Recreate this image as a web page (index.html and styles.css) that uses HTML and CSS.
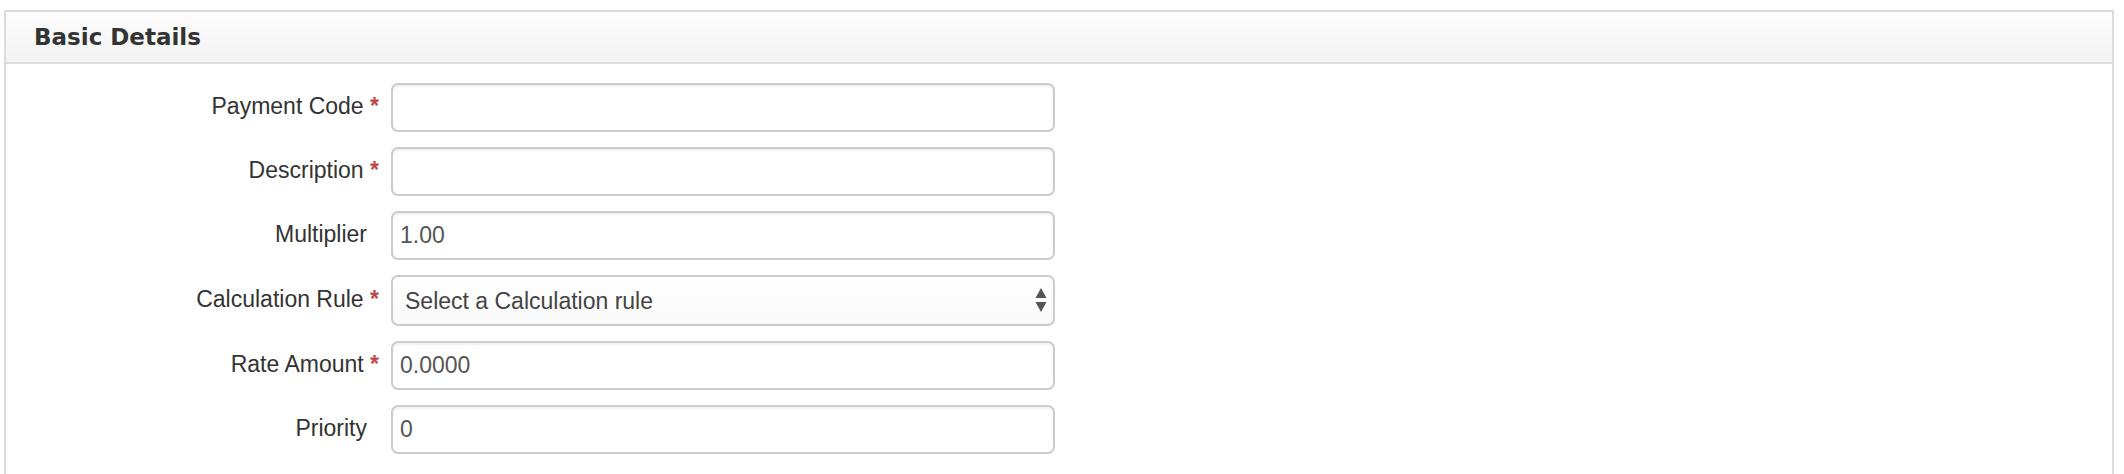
FILE: index.html
```html
<!DOCTYPE html>
<html lang="en">
<head>
  <meta charset="UTF-8" />
  <title>Basic Details</title>
  <link rel="stylesheet" href="styles.css">
</head>
<body>
<div class="panel">
  <div class="panel-heading">Basic Details</div>
  <div class="panel-body">
    <div class="form-row">
      <label class="control-label req">Payment Code <span class="required">*</span></label>
      <input class="form-control" type="text" value="" />
    </div>
    <div class="form-row">
      <label class="control-label req">Description <span class="required">*</span></label>
      <input class="form-control" type="text" value="" />
    </div>
    <div class="form-row">
      <label class="control-label">Multiplier</label>
      <input class="form-control" type="text" value="1.00" />
    </div>
    <div class="form-row">
      <label class="control-label req">Calculation Rule <span class="required">*</span></label>
      <div class="select-wrap">
        <select class="form-control select">
          <option>Select a Calculation rule</option>
        </select>
        <svg class="select-arrows" width="12" height="24" viewBox="0 0 12 24">
          <path d="M6 0 L11.5 10 L0.5 10 Z" fill="#555" />
          <path d="M0.5 14 L11.5 14 L6 24 Z" fill="#555" />
        </svg>
      </div>
    </div>
    <div class="form-row">
      <label class="control-label req">Rate Amount <span class="required">*</span></label>
      <input class="form-control" type="text" value="0.0000" />
    </div>
    <div class="form-row">
      <label class="control-label">Priority</label>
      <input class="form-control" type="text" value="0" />
    </div>
  </div>
</div>
</body>
</html>
```

FILE: styles.css
```css
body {
  margin: 0;
  background: #fff;
  font-family: "Liberation Sans", Arial, sans-serif;
  color: #333;
}
.panel {
  margin: 10px 10px 0 4px;
  border: 2px solid #dcdcdc;
  border-bottom: none;
  min-height: 470px;
}
.panel-heading {
  height: 50px;
  line-height: 50px;
  padding-left: 28px;
  font-family: "DejaVu Sans", Verdana, sans-serif;
  font-weight: bold;
  font-size: 23px;
  color: #333;
  background: linear-gradient(#fdfdfd, #f3f3f3);
  border-bottom: 2px solid #dcdcdc;
}
.panel-body {
  padding-top: 19px;
  display: flex;
  flex-direction: column;
  gap: 15px;
}
.form-row {
  display: flex;
  align-items: center;
}
.control-label {
  width: 385px;
  box-sizing: border-box;
  padding-right: 24px;
  padding-bottom: 2px;
  text-align: right;
  font-size: 23px;
  color: #333;
}
.control-label.req {
  padding-right: 12px;
}
.required {
  color: #b94a48;
  font-weight: bold;
}
.form-control {
  width: 664px;
  height: 49px;
  box-sizing: border-box;
  margin: 0;
  padding: 0 7px;
  border: 2px solid #cccccc;
  border-radius: 7px;
  box-shadow: inset 0 2px 2px rgba(0,0,0,0.06);
  font-family: "Liberation Sans", Arial, sans-serif;
  font-size: 23px;
  color: #555;
  background: #fff;
  outline: none;
}
.select-wrap {
  position: relative;
  width: 664px;
}
.select {
  -webkit-appearance: none;
  appearance: none;
  height: 51px;
  padding: 0 40px 0 12px;
  color: #444;
  background: linear-gradient(#ffffff, #f9f9f9);
  box-shadow: none;
}
.select-arrows {
  position: absolute;
  right: 8px;
  top: 13px;
  pointer-events: none;
}
```
